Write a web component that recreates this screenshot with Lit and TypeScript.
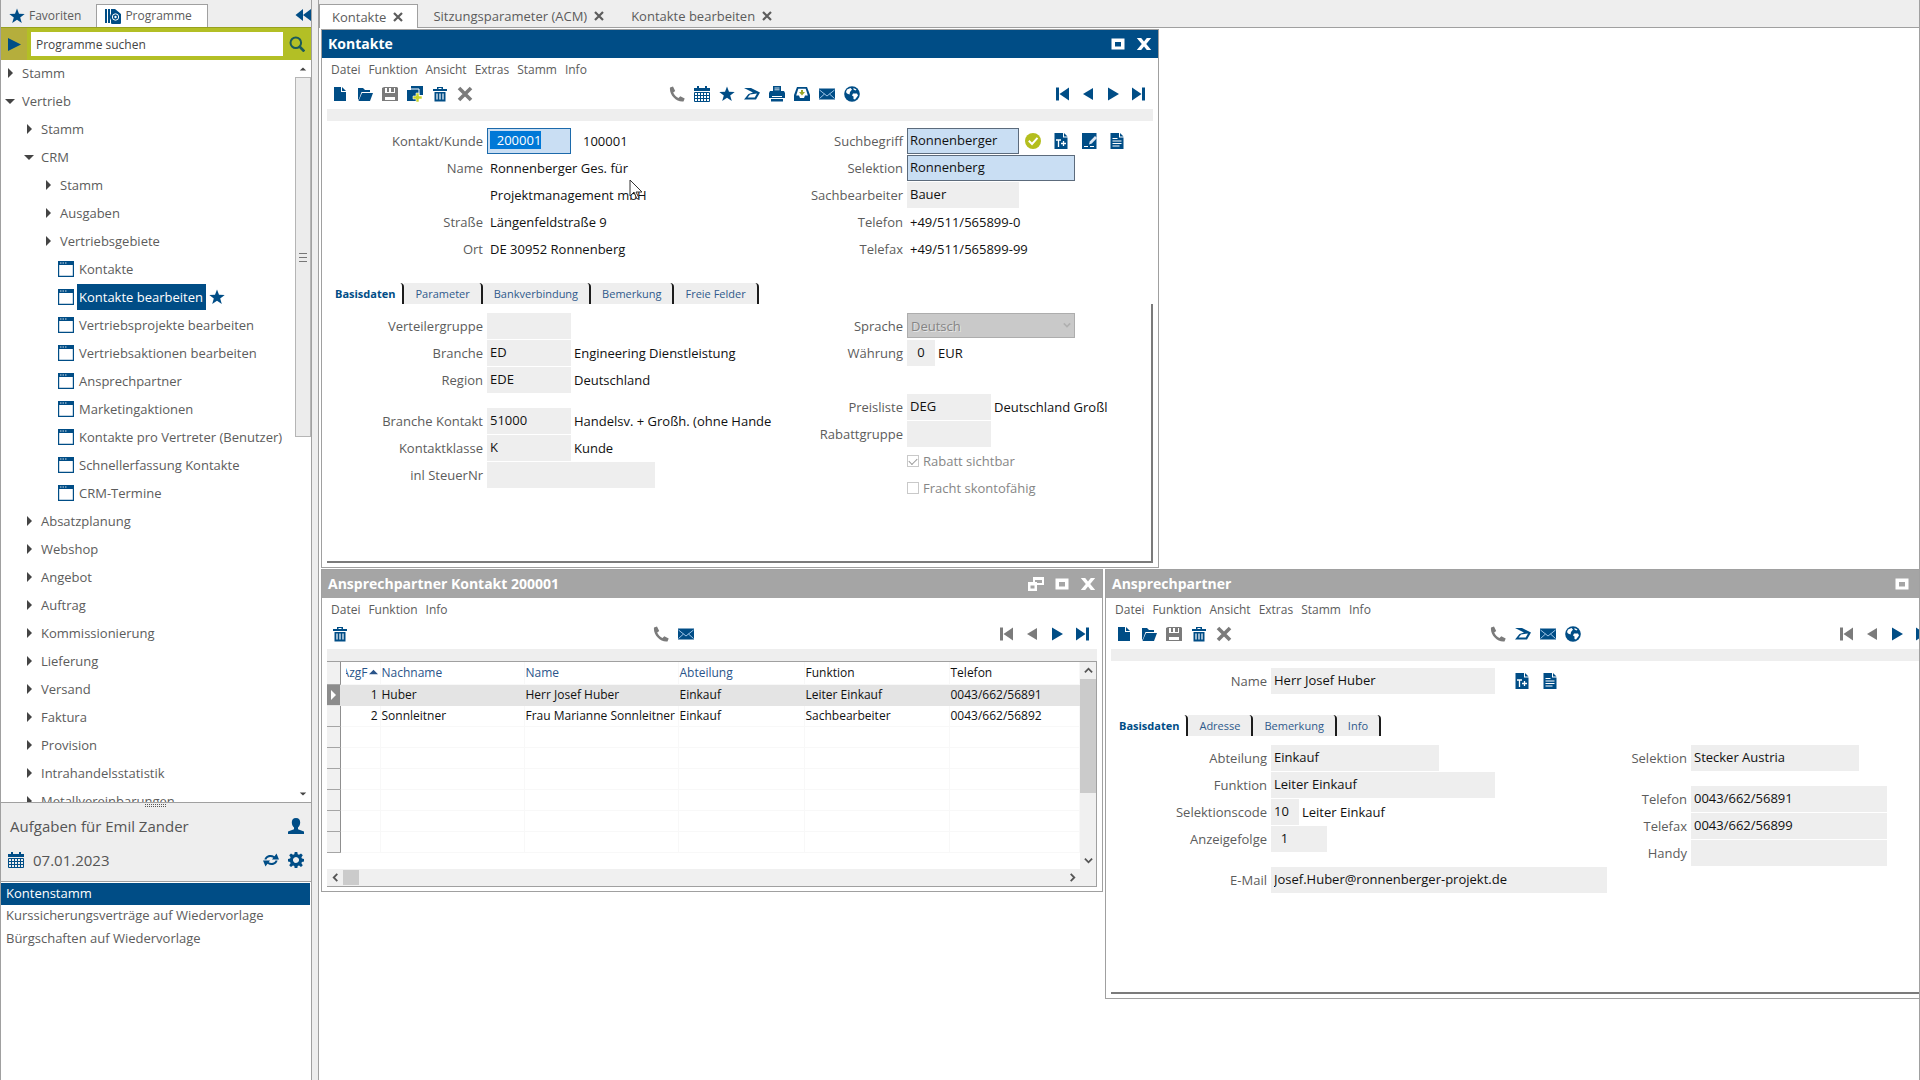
import { LitElement, html, css, svg, nothing, TemplateResult } from "lit";
import { customElement, property } from "lit/decorators.js";
import { classMap } from "lit/directives/class-map.js";

/* ---------- icons, all on a 16 x 16 grid ---------- */

const GLYPHS: Record<string, TemplateResult> = {
  file: svg`<path d="M2 1h7v5h5v9H2z"/><path d="M10 1l4 4h-4z"/>`,
  open: svg`<path d="M1 14V2h5l2 2h5v2H4.5L2 13z"/><path d="M5 7h11l-3 8H1.500z"/>`,
  save: svg`<path fill-rule="evenodd" d="M0 2l2-1h13l1 1v13H0zM3 2v5h10V2zM3 11v3h10v-3z"/><path d="M5 1h2v5H5zM9 2h3v4H9z"/>`,
  copy: svg`<path d="M4 0h12v9H4z"/><path d="M0 4h11v11H0z"/><path d="M0 4V3h12v6" fill="none" stroke="#fff"/><path d="M9 7h3v3h3v3h-3v3H9v-3H6v-3h3z" fill="#c8d42c" stroke="#fff" stroke-width=".6"/>`,
  trash: svg`<path d="M1 3h4V1h6v2h4v2H1z"/><path d="M6.500 2h3v1h-3z" fill="#fff"/><path d="M2.500 6h11v9.500h-11z"/><path d="M5 7.500v6M8 7.500v6M11 7.500v6" stroke="#fff" stroke-width="1.200"/>`,
  cross: svg`<path d="M2 2l12 12M14 2L2 14" stroke="currentColor" stroke-width="3.600" fill="none"/>`,
  phone: svg`<path d="M1 1.500L4 0.500 6.200 5 4.200 6.600C5.300 9 7 10.900 9.500 12L11.300 10.200 15.700 12.600 14.500 15.500C7.500 16.500 0 9 1 1.500z"/>`,
  calendar: svg`<path d="M0 2h16v3H0z"/><path d="M3 0h2v3H3zM11 0h2v3h-2z"/><path d="M.5 6.500h15v9H.5zM.5 9.500h15M.5 12.500h15M3.500 6v9.500M6.500 6v9.500M9.500 6v9.500M12.500 6v9.500" fill="none" stroke="currentColor"/>`,
  star: svg`<path d="M8 0.500l2 5.300 5.700.2-4.500 3.500L12.800 15 8 11.800 3.200 15l1.600-5.500L.3 6l5.700-.2z"/>`,
  plane: svg`<path d="M0 2h7l9 4.500-4 7H0L4.500 8 9 6.500 6 5z"/><path d="M6 8.600L13 7.400 10.700 11.600H3.600z" fill="#fff"/>`,
  printer: svg`<path d="M4 0h8v5H4z"/><path d="M5.500 2h5M5.500 3.800h5" stroke="#fff" stroke-width=".8"/><path d="M1 5h14l1 2v5H0V7z"/><path d="M2 13h12v2.500H2z"/><path d="M3 10.500h10" stroke="#fff"/>`,
  inbox: svg`<path fill-rule="evenodd" d="M3 1h10l3 8v6H0V9zM4.300 2.800L2.200 9.500H5l1 2.500h4l1-2.500h2.800L11.700 2.800z"/><path d="M7 4h2v2h2L8 9.500 5 6h2z" fill="#9aa82a"/>`,
  mail: svg`<path d="M0 2.500h16v11H0z"/><path d="M.5 4L8 10l7.500-6M.5 12.500L5.500 8M15.500 12.500L10.500 8" fill="none" stroke="#9cc3e6"/>`,
  globe: svg`<circle cx="8" cy="8" r="7.800"/><path d="M3 3.500L6.500 2 8 3.500 6 6 5.500 8.500 3 7.500 2 6zM9.500 2L12.500 3.500 11.500 4.500 9.500 3.500zM9 7.500L13 7.500 14 9.500 11 13.500 9.500 13 9.500 10.500 8 9.500z" fill="#fff"/>`,
  first: svg`<path d="M1 1.500h3v13H1z"/><path d="M14 1.500v13L4.500 8z"/>`,
  prev: svg`<path d="M13 2v12L3 8z"/>`,
  next: svg`<path d="M3 1.500v13L14 8z"/>`,
  last: svg`<path d="M12 1.500h3v13h-3z"/><path d="M2 1.500v13L11.500 8z"/>`,
  maximize: svg`<path fill-rule="evenodd" d="M1.500 2.500h13v11h-13zM5 6v4.500h6V6z"/>`,
  detach: svg`<path fill-rule="evenodd" d="M5 1h11v8H9V7h5V4H7v2H5z"/><path fill-rule="evenodd" d="M0 6h9v9H0zM2.500 9.500v3h4v-3z"/>`,
  close: svg`<path d="M0.800 2h4.400L8 5.600 10.800 2h4.400L10.200 8l5 6h-4.400L8 10.400 5.200 14H.8l5-6z"/>`,
  tabclose: svg`<path d="M4 4l8 8M12 4l-8 8" fill="none" stroke="currentColor" stroke-width="2.200"/>`,
  check: svg`<circle cx="8" cy="8" r="8" fill="#b4be1e"/><path d="M3.800 7.800L7 11l5.500-6.200" fill="none" stroke="#fff" stroke-width="2"/>`,
  textplus: svg`<path d="M1.500 0H10v4.500h4.500V16h-13z"/><path d="M11 0l3.500 3.500H11z"/><path d="M3 7h5M5.500 7v7M8 10.500h5M10.500 8v5" stroke="#fff" stroke-width="1.300"/>`,
  edit: svg`<path d="M1 0h14.500v16H1z"/><path d="M8 11.500l.8-3L14 3l2 2-5.200 5.500z" fill="#dce6f2"/><path d="M3 13.500h4M9 13.500h4" stroke="#fff" stroke-width="1.200"/>`,
  doc: svg`<path d="M1.500 0H10v4.500h4.500V16h-13z"/><path d="M11 0l3.500 3.500H11z"/><path d="M3.500 5.500h5M3.500 8h9M3.500 10.500h9M3.500 13h7" stroke="#fff" stroke-width="1.200"/>`,
  window: svg`<path d="M.6 1.500h14.800v13.900H.6z" fill="#fff" stroke="currentColor" stroke-width="1.200"/><path d="M0 0h16v4H0z"/><path d="M2 2h7" stroke="#fff" stroke-width=".8" stroke-dasharray="1.500 1"/>`,
  programs: svg`<path d="M0 1h2v14H0zM3 1h2v14H3z"/><path d="M6 1h4l6 5v4a5 5 0 0 1-10 5z"/><circle cx="10.500" cy="9" r="5.500"/><circle cx="10.500" cy="9" r="3.200" fill="none" stroke="#fff"/><circle cx="10.500" cy="9" r="1.200" fill="#fff"/>`,
  search: svg`<circle cx="6.800" cy="6.800" r="5.300" fill="none" stroke="currentColor" stroke-width="2"/><path d="M10.500 10.500l4.800 5" stroke="currentColor" stroke-width="2.600"/>`,
  collapse: svg`<path d="M8 2v12L.5 8zM16 2v12L8 8z"/>`,
  user: svg`<path d="M8 0c3 0 4.200 2 4.200 4.500S10.800 8.700 10 9.500v1.800l6 2.200V16H0v-2.500l6-2.200V9.500C5.200 8.700 3.800 7 3.800 4.500S5 0 8 0z"/>`,
  refresh: svg`<path d="M1.500 7.500C2 3.500 7.500 1.500 11.500 4.200L13.500 1.500 16 7.500 9 7.500 10.300 5.800C7.500 4.300 4 5.200 3.500 7.500zM14.500 8.500C14 12.500 8.500 14.500 4.500 11.800L2.500 14.500 0 8.500 7 8.500 5.700 10.200C8.500 11.700 12 10.800 12.500 8.500z"/>`,
  gear: svg`<path fill-rule="evenodd" d="M6.700 0h2.600l.4 2.300 1.300.5 2-1.400 1.800 1.800-1.400 2 .5 1.300 2.100.4v2.600l-2.100.4-.5 1.300 1.400 2-1.800 1.800-2-1.400-1.300.5-.4 2.300H6.700l-.4-2.300-1.300-.5-2 1.400-1.800-1.800 1.400-2-.5-1.300L0 9.500V6.900l2.100-.4.5-1.300-1.400-2L3 1.400l2 1.400 1.300-.5zM8 5a3 3 0 1 0 .01 0z"/>`,
};

const icon = (name: string) => html`<svg class="icon" viewBox="0 0 16 16" width="16" height="16" fill="currentColor" aria-hidden="true">${GLYPHS[name]}</svg>`;

const shared = css`
  * { box-sizing: border-box; }
  :host {
    --blue: #004d86;
    --panel: #eeeeee;
    --grey: #5c5c5c;
    --line: #a0a0a0;
    font-family: "Open Sans", "Noto Sans", sans-serif;
    font-size: 13px;
    color: var(--grey);
  }
  button, input, select { font: inherit; color: inherit; }
  button { background: none; border: 0; padding: 0; display: inline-flex; align-items: center; justify-content: center; }
  .icon { display: block; flex: none; }
`;

/* ---------- one window of the desktop ---------- */

interface Tool { name: string; label: string; off?: boolean }
const t = (name: string, label: string, off = false): Tool => ({ name, label, off });

@customElement("mdi-window")
export class MdiWindow extends LitElement {
  @property() heading = "";
  @property({ type: Boolean }) active = false;
  @property({ type: Boolean }) detachable = false;
  @property({ attribute: false }) menus: string[] = [];
  @property({ attribute: false }) left: Tool[] = [];
  @property({ attribute: false }) middle: Tool[] = [];
  @property({ type: Boolean }) atStart = false;

  static styles = [shared, css`
    :host { display: flex; flex-direction: column; background: #fff; border: 1px solid var(--line); }
    .title { display: flex; align-items: center; height: 28px; flex: none; padding: 0 6px; background: #a5a5a5; color: #fff; }
    .title.active { background: var(--blue); }
    h2 { flex: 1; margin: 0; font-size: 14px; line-height: 24px; font-weight: 700; }
    .winbtns { display: flex; gap: 10px; }
    .menu { display: flex; gap: 8px; padding: 3px 9px 0; height: 26px; font-size: 12px; flex: none; }
    .menu button { line-height: 18px; height: 18px; }
    .tools { display: flex; justify-content: space-between; height: 25px; padding: 2px 12px 0 10px; flex: none; }
    .group { display: flex; gap: 9px; color: var(--blue); height: 16px; }
    .off { color: #7b7b7b; }
    .band { height: 12px; margin: 0 5px; background: var(--panel); flex: none; }
    .content { flex: 1; min-height: 0; padding: 0 5px 4px; display: flex; flex-direction: column; }
  `];

  private tools(list: Tool[]) {
    return html`<div class="group">${list.map((x) => html`<button class=${classMap({ off: !!x.off })} aria-label=${x.label} ?disabled=${x.off}>${icon(x.name)}</button>`)}</div>`;
  }

  render() {
    const s = this.atStart;
    return html`
      <header class=${classMap({ title: true, active: this.active })}>
        <h2>${this.heading}</h2>
        <div class="winbtns">
          ${this.detachable ? html`<button aria-label="Lösen">${icon("detach")}</button>` : nothing}
          <button aria-label="Maximieren">${icon("maximize")}</button>
          <button aria-label="Schließen">${icon("close")}</button>
        </div>
      </header>
      <nav class="menu">${this.menus.map((m) => html`<button>${m}</button>`)}</nav>
      <div class="tools">
        ${this.tools(this.left)} ${this.tools(this.middle)}
        ${this.tools([t("first", "Erster", s), t("prev", "Voriger", s), t("next", "Nächster"), t("last", "Letzter")])}
      </div>
      <div class="band"></div>
      <div class="content"><slot></slot></div>`;
  }
}

/* ---------- data ---------- */

interface Node { label: string; level: number; kind: "closed" | "open" | "leaf"; selected?: boolean }
const n = (level: number, label: string, kind: Node["kind"] = "closed", selected = false): Node => ({ level, label, kind, selected });

const TREE: Node[] = [
  n(0, "Stamm"), n(0, "Vertrieb", "open"),
  n(1, "Stamm"), n(1, "CRM", "open"),
  n(2, "Stamm"), n(2, "Ausgaben"), n(2, "Vertriebsgebiete"),
  n(3, "Kontakte", "leaf"), n(3, "Kontakte bearbeiten", "leaf", true),
  n(3, "Vertriebsprojekte bearbeiten", "leaf"), n(3, "Vertriebsaktionen bearbeiten", "leaf"),
  n(3, "Ansprechpartner", "leaf"), n(3, "Marketingaktionen", "leaf"),
  n(3, "Kontakte pro Vertreter (Benutzer)", "leaf"), n(3, "Schnellerfassung Kontakte", "leaf"),
  n(3, "CRM-Termine", "leaf"),
  ...["Absatzplanung", "Webshop", "Angebot", "Auftrag", "Kommissionierung", "Lieferung", "Versand",
    "Faktura", "Provision", "Intrahandelsstatistik", "Metallvereinbarungen"].map((l) => n(1, l)),
];

const TASKS = ["Kontenstamm", "Kurssicherungsverträge auf Wiedervorlage", "Bürgschaften auf Wiedervorlage"];

const PARTNERS = [
  ["1", "Huber", "Herr Josef Huber", "Einkauf", "Leiter Einkauf", "0043/662/56891"],
  ["2", "Sonnleitner", "Frau Marianne Sonnleitner", "Einkauf", "Sachbearbeiter", "0043/662/56892"],
];

const ALL_MENUS = ["Datei", "Funktion", "Ansicht", "Extras", "Stamm", "Info"];

const NEW = t("file", "Neu");
const OPEN = t("open", "Öffnen");
const SAVE = t("save", "Speichern", true);
const COPY = t("copy", "Kopieren");
const TRASH = t("trash", "Löschen");
const CANCEL = t("cross", "Abbrechen", true);
const PHONE = t("phone", "Anrufen", true);
const PLANE = t("plane", "Senden");
const MAIL = t("mail", "E-Mail");
const GLOBE = t("globe", "Web");

let serial = 0;
/* A labelled text box; extra holds what follows it on the row. */
const field = (label: string, value: string, size: string, extra: unknown = nothing, kind = "") => {
  const id = `f${serial++}`;
  return html`<div class="row"><label for=${id}>${label}</label><input id=${id} class="box ${size} ${kind}" .value=${value} ?readonly=${kind === ""}>${extra}</div>`;
};
const note = (text: string) => html`<span class="note">${text}</span>`;
const plain = (label: string, text: string) => html`<div class="row"><span class="lab">${label}</span><span class="val">${text}</span></div>`;
const tabs = (names: string[]) => html`<div class="tabs" role="tablist">${names.map((x, i) => html`<button role="tab" aria-selected=${i === 0 ? "true" : "false"} class=${classMap({ tab: true, current: i === 0 })}>${x}</button>`)}</div>`;

@customElement("app-root")
export class AppRoot extends LitElement {
  static styles = [shared, css`
    :host { display: block; height: 100vh; overflow: hidden; background: #fff; }
    .app { display: grid; grid-template-columns: 312px 7px minmax(0, 1fr); height: 100%; }
    ul { margin: 0; padding: 0; list-style: none; }

    /* sidebar */
    .side { display: flex; flex-direction: column; min-height: 0; border-right: 1px solid var(--line); border-left: 1px solid var(--line); }
    .sidetabs { display: flex; height: 27px; flex: none; background: var(--panel); align-items: flex-end; }
    .sidetab { gap: 4px; height: 23px; padding: 0 15px 0 8px; line-height: 22px; font-size: 12px; }
    .sidetab .icon { color: var(--blue); }
    .sidetab.on { background: #fff; border: 1px solid var(--line); border-bottom: 0; }
    .fold { margin-left: auto; height: 25px; color: var(--blue); }
    .search { display: flex; align-items: center; height: 33px; flex: none; background: #b3bf25; color: var(--blue); border-top: 1px solid #97a11f; }
    .go { width: 26px; height: 32px; background: #b5ae3c; }
    .find { width: 28px; color: #1b5a5a; }
    .search input { flex: 1; min-width: 0; height: 24px; margin: 0 0 0 4px; padding: 0 5px; border: 0; background: #fff; font-size: 12px; color: #444; border-radius: 0; }
    .search input::placeholder { color: #444; opacity: 1; }
    .treewrap { flex: 1; display: flex; min-height: 0; border-bottom: 1px solid var(--line); }
    .tree { flex: 1; overflow: hidden; }
    .node { display: flex; align-items: center; height: 28px; white-space: nowrap; line-height: 16px; padding-bottom: 2px; }
    .l0 { padding-left: 3px; } .l1 { padding-left: 22px; } .l2 { padding-left: 41px; } .l3 { padding-left: 57px; }
    .arrow { width: 18px; height: 12px; padding-right: 6px; color: #444; }
    .leafname { padding: 0 2px; margin-left: 3px; height: 26px; }
    .node.sel .leafname { background: var(--blue); color: #fff; padding-right: 3px; }
    .node .icon { color: var(--blue); }
    .node .arrow .icon { color: #444; }
    .node .fav { margin-left: 3px; }
    .bar { width: 16px; flex: none; display: flex; flex-direction: column; align-items: center; }
    .bar .track { flex: 1; align-self: stretch; }
    .bar .thumb { height: 360px; background: #ececec; border: 1px solid #b5b5b5; display: flex; align-items: center; justify-content: center; }
    .bar button { height: 17px; width: 16px; color: #444; }
    .grips { width: 8px; height: 9px; border-top: 1px solid #777; border-bottom: 1px solid #777; background: linear-gradient(#777, #777) center / 8px 1px no-repeat; }
    .tasks { height: 277px; flex: none; display: flex; flex-direction: column; background: var(--panel); }
    .grip { width: 22px; height: 4px; margin: 1px auto; background: repeating-linear-gradient(90deg, transparent 0 1px, var(--panel) 1px 2px), repeating-linear-gradient(#555 0 1px, var(--panel) 1px 2px); flex: none; }
    .taskhead { display: flex; align-items: center; justify-content: space-between; padding: 0 7px 0 9px; color: #555; font-size: 15px; height: 34px; }
    .taskhead.date { height: 33px; padding-left: 7px; }
    .taskhead .icon { color: var(--blue); }
    .with { display: flex; gap: 9px; align-items: center; }
    .tasklist { flex: 1; margin-top: 5px; background: #fff; border-top: 1px solid var(--line); padding-top: 1px; }
    .task { display: block; height: 23px; line-height: 21px; padding: 0 5px; white-space: nowrap; overflow: hidden; color: inherit; text-decoration: none; }
    .task.on { background: var(--blue); color: #fff; height: 22px; margin-right: 1px; }
    .gutter { background: var(--panel); border-right: 1px solid var(--line); }

    /* workspace */
    .work { display: flex; flex-direction: column; min-width: 0; border-right: 1px solid var(--line); }
    .docs { display: flex; height: 28px; flex: none; background: var(--panel); border-bottom: 1px solid var(--line); padding-top: 4px; }
    .doc { display: flex; align-items: center; gap: 4px; padding: 0 9px 0 15px; height: 24px; }
    .doc.on { background: #fff; border: 1px solid var(--line); border-bottom: 0; padding-left: 12px; padding-right: 11px; }
    .desk { flex: 1; position: relative; overflow: hidden; }
    .win { position: absolute; }
    .w1 { left: 2px; top: 1px; width: 838px; height: 539px; }
    .w2 { left: 2px; top: 541px; width: 782px; height: 323px; }
    .w3 { left: 786px; top: 541px; width: 838px; height: 430px; }
    .pointer { position: absolute; left: 310px; top: 151px; width: 14px; height: 22px; }

    /* forms */
    .form { display: grid; grid-template-columns: 420px minmax(0, 1fr); }
    .top { padding-top: 6px; }
    .row { display: flex; align-items: center; height: 27px; }
    .skip { height: 27px; } .half { height: 14px; } .gap { height: 21px; flex: none; }
    .row label:first-child, .lab { width: 156px; flex: none; text-align: right; margin-right: 4px; white-space: nowrap; }
    .box { flex: none; height: 26px; padding: 0 2px 1px 2px; border: 1px solid transparent; background: var(--panel); color: #111; border-radius: 0; outline: none; }
    .box.key { background: #c9def3; border-color: #5c6b7c; }
    .box.pick { background: #c9def3; border-color: #1c6aab; }
    .pick::selection { background: #0078d7; color: #fff; }
    .s24 { width: 28px; } .s56 { width: 56px; } .s84 { width: 84px; } .s112 { width: 112px; } .s168 { width: 168px; } .s196 { width: 196px; } .s224 { width: 224px; } .s336 { width: 336px; }
    .num { text-align: center; }
    .note, .val { color: #111; white-space: nowrap; flex: none; }
    .note { padding-left: 3px; }
    .far { padding-left: 12px; }
    .val { padding-left: 3px; }
    .acts { display: flex; gap: 12px; padding-left: 6px; color: var(--blue); }
    .acts.wide { padding-left: 19px; }
    .tabs { display: flex; height: 21px; flex: none; }
    .tab { height: 21px; padding: 0 11px; font-size: 11px; color: #2f5a8c; background: var(--panel); border-right: 2px solid #1c1c1c; border-top-right-radius: 4px; }
    .tab.current { background: #fff; font-weight: 700; color: var(--blue); padding: 0 7px 0 8px; }
    .sheet { flex: 1; border-right: 2px solid #7b7b7b; border-bottom: 2px solid #7b7b7b; padding-top: 8px; align-content: start; }
    .dd { position: relative; display: flex; }
    .dd select { appearance: none; width: 168px; height: 25px; padding: 0 3px; background: #c9c9c9; border: 1px solid #adadad; border-radius: 0; color: #858585; opacity: 1; text-shadow: 1px 1px #e4e4e4; }
    .dd .icon { position: absolute; right: 4px; top: 8px; width: 8px; height: 8px; color: #b0b0b0; }
    .tick { display: flex; align-items: center; gap: 4px; margin-left: 160px; color: #868686; }
    .tick input { appearance: none; width: 12px; height: 12px; margin: 0; border: 1px solid #c9c9c9; background: #fff; display: grid; place-items: center; }
    .tick input:checked::after { content: ""; width: 7px; height: 4px; border-left: 1px solid #999; border-bottom: 1px solid #999; transform: rotate(-45deg); }

    /* table of partners */
    .gridbox { flex: 1; display: grid; grid-template-columns: minmax(0, 1fr) 16px; grid-template-rows: minmax(0, 1fr) 17px; border-top: 1px solid var(--line); border-bottom: 1px solid var(--line); border-right: 1px solid var(--line); }
    table { border-collapse: collapse; table-layout: fixed; width: 100%; color: #111; align-self: start; font-size: 12px; }
    th, td { height: 21px; padding: 0 0 0 1px; text-align: left; font-weight: 400; white-space: nowrap; overflow: hidden; line-height: 19px; border-right: 1px solid #f8f8f8; border-bottom: 1px solid #f8f8f8; }
    thead th { height: 22px; }
    .hl { color: #2a548a; }
    .seq { text-align: right; padding: 0 2px 0 0; }
    .sort { display: flex; align-items: center; justify-content: flex-end; gap: 1px; overflow: hidden; margin-left: 3px; }
    .sort .name { display: flex; justify-content: flex-end; width: 22px; overflow: hidden; }
    .hd { background: #f1f1f1; border-right: 1px solid #8f8f8f; border-bottom: 1px solid #a5a5a5; padding: 0; }
    .cur td { background: #e4e4e4; border-color: #e4e4e4; }
    .cur .hd { background: #8c8c8c; color: #fff; }
    .c0 { width: 13px; } .c1 { width: 40px; } .c2 { width: 144px; } .c3 { width: 154px; } .c4 { width: 126px; } .c5 { width: 145px; }
    .vbar, .hbar { background: #f0f0f0; display: flex; color: #555; }
    .vbar { flex-direction: column; }
    .vbar button, .hbar button { width: 16px; height: 17px; }
    .vbar i { height: 114px; background: #cbcbcb; }
    .hbar i { width: 16px; margin: 1px 0; background: #cbcbcb; }
    .push { margin: auto 0 0 0; }
    .hbar .push { margin: 0 0 0 auto; }
  `];

  /* The key box can take focus only after the window around it has drawn its slot. */
  async firstUpdated() {
    await this.renderRoot.querySelector<MdiWindow>(".w1")?.updateComplete;
    const box = this.renderRoot.querySelector<HTMLInputElement>(".pick");
    box?.focus();
    box?.select();
  }

  private tri(d: string, size = 10) {
    return html`<svg class="icon" viewBox="0 0 10 10" width=${size} height=${size} fill="currentColor" aria-hidden="true"><path d=${d}/></svg>`;
  }

  private chev(d: string) {
    return html`<svg class="icon" viewBox="0 0 10 10" width="9" height="9" fill="none" stroke="currentColor" stroke-width="2" aria-hidden="true"><path d=${d}/></svg>`;
  }

  private node(x: Node) {
    if (x.kind === "leaf") {
      return html`<li class=${classMap({ node: true, l3: true, sel: !!x.selected })}>${icon("window")}<button class="leafname">${x.label}</button>${x.selected ? html`<span class="fav">${icon("star")}</span>` : nothing}</li>`;
    }
    const open = x.kind === "open";
    return html`<li class="node l${x.level}"><button class="arrow" aria-label=${open ? "Zuklappen" : "Aufklappen"}>${this.tri(open ? "M0 3h10L5 8z" : "M3 0l5 5-5 5z")}</button><span>${x.label}</span></li>`;
  }

  private sidebar() {
    return html`<aside class="side">
      <div class="sidetabs">
        <button class="sidetab">${icon("star")}Favoriten</button>
        <button class="sidetab on">${icon("programs")}Programme</button>
        <button class="fold" aria-label="Einklappen">${icon("collapse")}</button>
      </div>
      <div class="search">
        <button class="go" aria-label="Starten">${this.tri("M0 0l10 5L0 10z", 13)}</button>
        <input aria-label="Programme suchen" placeholder="Programme suchen">
        <button class="find" aria-label="Suchen">${icon("search")}</button>
      </div>
      <div class="treewrap">
        <ul class="tree">${TREE.map((x) => this.node(x))}</ul>
        <div class="bar">
          <button aria-label="Nach oben">${this.tri("M1 7h8L5 3z", 8)}</button>
          <div class="track"><div class="thumb"><span class="grips"></span></div></div>
          <button aria-label="Nach unten">${this.tri("M1 3h8L5 7z", 8)}</button>
        </div>
      </div>
      <section class="tasks">
        <div class="grip"></div>
        <div class="taskhead"><span>Aufgaben für Emil Zander</span><button aria-label="Benutzer">${icon("user")}</button></div>
        <div class="taskhead date">
          <span class="with">${icon("calendar")}07.01.2023</span>
          <span class="with"><button aria-label="Aktualisieren">${icon("refresh")}</button><button aria-label="Einstellungen">${icon("gear")}</button></span>
        </div>
        <div class="tasklist">${TASKS.map((x, i) => html`<a href="#" class=${classMap({ task: true, on: i === 0 })}>${x}</a>`)}</div>
      </section>
    </aside>`;
  }

  private contact() {
    return html`<mdi-window class="win w1" heading="Kontakte" active .menus=${ALL_MENUS}
      .left=${[NEW, OPEN, SAVE, COPY, TRASH, CANCEL]}
      .middle=${[PHONE, t("calendar", "Termin"), t("star", "Favorit"), PLANE, t("printer", "Drucken"), t("inbox", "Ablage"), MAIL, GLOBE]}>
      <div class="form top">
        <div>
          ${field("Kontakt/Kunde", "  200001", "s84", html`<span class="note far">100001</span>`, "pick")}
          ${plain("Name", "Ronnenberger Ges. für")}
          ${plain("", "Projektmanagement mbH")}
          ${plain("Straße", "Längenfeldstraße 9")}
          ${plain("Ort", "DE 30952 Ronnenberg")}
        </div>
        <div>
          ${field("Suchbegriff", "Ronnenberger", "s112", html`<span class="acts"><button aria-label="Geprüft">${icon("check")}</button><button aria-label="Text hinzufügen">${icon("textplus")}</button><button aria-label="Bearbeiten">${icon("edit")}</button><button aria-label="Dokument">${icon("doc")}</button></span>`, "key")}
          ${field("Selektion", "Ronnenberg", "s168", nothing, "key")}
          ${field("Sachbearbeiter", "Bauer", "s112")}
          ${plain("Telefon", "+49/511/565899-0")}
          ${plain("Telefax", "+49/511/565899-99")}
        </div>
      </div>
      <div class="gap"></div>
      ${tabs(["Basisdaten", "Parameter", "Bankverbindung", "Bemerkung", "Freie Felder"])}
      <div class="form sheet">
        <div>
          ${field("Verteilergruppe", "", "s84")}
          ${field("Branche", "ED", "s84", note("Engineering Dienstleistung"))}
          ${field("Region", "EDE", "s84", note("Deutschland"))}
          <div class="half"></div>
          ${field("Branche Kontakt", "51000", "s84", note("Handelsv. + Großh. (ohne Hande"))}
          ${field("Kontaktklasse", "K", "s84", note("Kunde"))}
          ${field("inl SteuerNr", "", "s168")}
        </div>
        <div>
          <div class="row"><label for="lang">Sprache</label><span class="dd"><select id="lang" disabled><option>Deutsch</option></select>${this.chev("M1 3l4 4 4-4")}</span></div>
          ${field("Währung", "0", "s24 num", note("EUR"))}
          <div class="skip"></div>
          ${field("Preisliste", "DEG", "s84", note("Deutschland Großl"))}
          ${field("Rabattgruppe", "", "s84")}
          <div class="row"><span class="tick"><input type="checkbox" id="rab" checked disabled><label for="rab">Rabatt sichtbar</label></span></div>
          <div class="row"><span class="tick"><input type="checkbox" id="fra" disabled><label for="fra">Fracht skontofähig</label></span></div>
        </div>
      </div>
    </mdi-window>`;
  }

  private partners() {
    return html`<mdi-window class="win w2" heading="Ansprechpartner Kontakt 200001" detachable atStart .menus=${["Datei", "Funktion", "Info"]} .left=${[TRASH]} .middle=${[PHONE, MAIL]}>
      <div class="gridbox">
        <table>
          <colgroup><col class="c0"><col class="c1"><col class="c2"><col class="c3"><col class="c4"><col class="c5"><col></colgroup>
          <thead><tr>
            <th class="hd"></th>
            <th class="seq hl"><span class="sort"><span class="name">AzgF</span>${this.tri("M0 7h10L5 2z", 9)}</span></th>
            <th class="hl">Nachname</th><th class="hl">Name</th><th class="hl">Abteilung</th><th>Funktion</th><th>Telefon</th>
          </tr></thead>
          <tbody>
            ${PARTNERS.map((p, i) => html`<tr class=${classMap({ cur: i === 0 })}><td class="hd">${i === 0 ? this.tri("M4 0l5 5-5 5z") : nothing}</td>${p.map((c, k) => html`<td class=${classMap({ seq: k === 0 })}>${c}</td>`)}</tr>`)}
            ${Array.from({ length: 6 }, () => html`<tr><td class="hd"></td><td></td><td></td><td></td><td></td><td></td><td></td></tr>`)}
          </tbody>
        </table>
        <div class="vbar"><button aria-label="Nach oben">${this.chev("M1 7l4-4 4 4")}</button><i></i><button class="push" aria-label="Nach unten">${this.chev("M1 3l4 4 4-4")}</button></div>
        <div class="hbar"><button aria-label="Nach links">${this.chev("M7 1L3 5l4 4")}</button><i></i><button class="push" aria-label="Nach rechts">${this.chev("M3 1l4 4-4 4")}</button></div>
        <div class="hbar"></div>
      </div>
    </mdi-window>`;
  }

  private person() {
    return html`<mdi-window class="win w3" heading="Ansprechpartner" atStart .menus=${ALL_MENUS} .left=${[NEW, OPEN, SAVE, TRASH, CANCEL]} .middle=${[PHONE, PLANE, MAIL, GLOBE]}>
      <div class="top">
        ${field("Name", "Herr Josef Huber", "s224", html`<span class="acts wide"><button aria-label="Text hinzufügen">${icon("textplus")}</button><button aria-label="Dokument">${icon("doc")}</button></span>`)}
      </div>
      <div class="gap"></div>
      ${tabs(["Basisdaten", "Adresse", "Bemerkung", "Info"])}
      <div class="form sheet">
        <div>
          ${field("Abteilung", "Einkauf", "s168")}
          ${field("Funktion", "Leiter Einkauf", "s224")}
          ${field("Selektionscode", "10", "s24", note("Leiter Einkauf"))}
          ${field("Anzeigefolge", "  1", "s56")}
          <div class="half"></div>
          ${field("E-Mail", "Josef.Huber@ronnenberger-projekt.de", "s336")}
        </div>
        <div>
          ${field("Selektion", "Stecker Austria", "s168")}
          <div class="half"></div>
          ${field("Telefon", "0043/662/56891", "s196")}
          ${field("Telefax", "0043/662/56899", "s196")}
          ${field("Handy", "", "s196")}
        </div>
      </div>
    </mdi-window>`;
  }

  render() {
    serial = 0;
    return html`<div class="app">
      ${this.sidebar()}
      <div class="gutter"></div>
      <main class="work">
        <nav class="docs">
          ${["Kontakte", "Sitzungsparameter (ACM)", "Kontakte bearbeiten"].map((x, i) => html`<div class=${classMap({ doc: true, on: i === 0 })}><span>${x}</span><button aria-label="${x} schließen">${icon("tabclose")}</button></div>`)}
        </nav>
        <div class="desk">
          ${this.contact()} ${this.partners()} ${this.person()}
          <svg class="pointer" viewBox="0 0 14 22"><path d="M1 1v16l4-4 3 7 2-1-3-6h6z" fill="#fff" stroke="#333"/></svg>
        </div>
      </main>
    </div>`;
  }
}
